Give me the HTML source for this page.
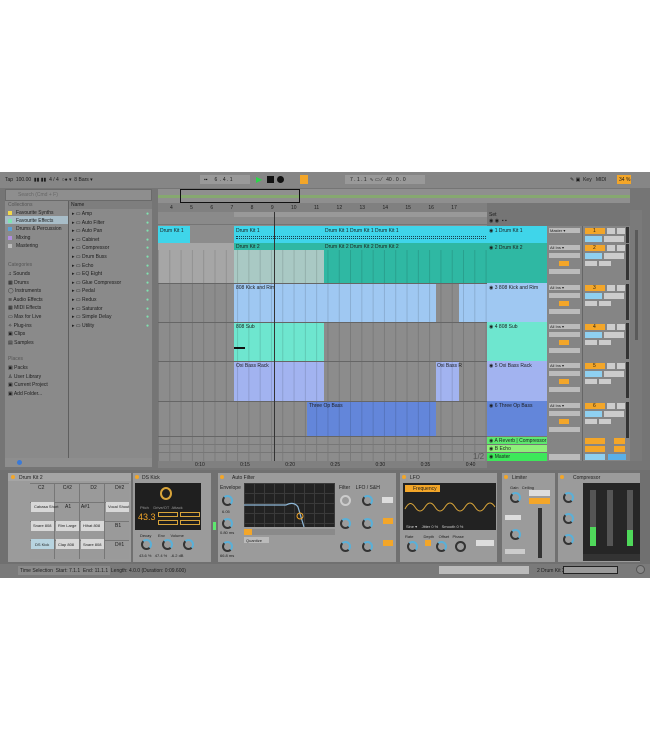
<!DOCTYPE html>
<html><head><style>
*{margin:0;padding:0;box-sizing:border-box}
body{width:650px;height:750px;background:#fff;position:relative;font-family:"Liberation Sans",sans-serif;font-size:5px;color:#222;overflow:hidden}
.a{position:absolute}
.t{position:absolute;white-space:nowrap;font-size:5px;color:#1c1c1c}
.k{position:absolute;width:11px;height:11px;border:2px solid #333;border-radius:50%;border-top-color:#5ab0d8;border-right-color:#5ab0d8}
.g{position:absolute;background-image:linear-gradient(90deg,rgba(0,0,0,.13) 1px,transparent 1px);background-size:11.3px 100%}
</style></head><body>
<div class="a" style="left:0;top:172px;width:650px;height:406px;background:#757575"></div>
<div class="a" style="left:0;top:172px;width:650px;height:16px;background:#868686"></div>
<div class="t" style="left:5px;top:177px">Tap &nbsp;100.00 &nbsp;▮▮ ▮▮ &nbsp;4 / 4 &nbsp;○● ▾ &nbsp;8 Bars ▾</div>
<div class="a" style="left:200px;top:175px;width:50px;height:9px;background:#999"></div>
<div class="t" style="left:204px;top:177px">▪▪ &nbsp;&nbsp;&nbsp;&nbsp;6 &nbsp;. 4 . 1</div>
<div class="t" style="left:256px;top:175px;font-size:8px;color:#2bd64a">▶</div>
<div class="a" style="left:267px;top:176px;width:7px;height:7px;background:#111"></div>
<div class="a" style="left:277px;top:176px;width:7px;height:7px;background:#111;border-radius:50%"></div>
<div class="a" style="left:300px;top:175px;width:8px;height:9px;background:#f3a629"></div>
<div class="a" style="left:345px;top:175px;width:80px;height:9px;background:#999"></div>
<div class="t" style="left:350px;top:177px">7 . 1 . 1 &nbsp;∿ ▭ ⁄ &nbsp;&nbsp;40 . 0 . 0</div>
<div class="t" style="left:570px;top:177px">✎ ▣ &nbsp;Key &nbsp;&nbsp;MIDI</div>
<div class="a" style="left:617px;top:175px;width:14px;height:9px;background:#f3a629"></div>
<div class="t" style="left:619px;top:177px">34 %</div>

<div class="a" style="left:5px;top:189px;width:147px;height:12px;background:#8e8e8e;border:1px solid #6a6a6a"></div>
<div class="t" style="left:18px;top:192px;color:#666">Search (Cmd + F)</div>
<div class="a" style="left:5px;top:201px;width:147px;height:257px;background:#8a8a8a"></div>
<div class="a" style="left:68px;top:201px;width:1px;height:257px;background:#5f5f5f"></div>
<div class="a" style="left:69px;top:201px;width:83px;height:8px;background:#7e7e7e"></div>
<div class="t" style="left:8px;top:202px;color:#555">Collections</div>
<div class="t" style="left:71px;top:202px">Name</div>
<div class="a" style="left:5px;top:216px;width:63px;height:8px;background:#a8bdc8"></div>
<div class="a" style="left:8px;top:211px;width:4px;height:4px;background:#f2d84a"></div><div class="t" style="left:16px;top:210px">Favourite Synths</div>
<div class="a" style="left:8px;top:219px;width:4px;height:4px;background:#7fe3b0"></div><div class="t" style="left:16px;top:218px">Favourite Effects</div>
<div class="a" style="left:8px;top:227px;width:4px;height:4px;background:#5aa0d8"></div><div class="t" style="left:16px;top:226px">Drums &amp; Percussion</div>
<div class="a" style="left:8px;top:236px;width:4px;height:4px;background:#b08ee0"></div><div class="t" style="left:16px;top:235px">Mixing</div>
<div class="a" style="left:8px;top:244px;width:4px;height:4px;background:#bbb"></div><div class="t" style="left:16px;top:243px">Mastering</div>
<div class="t" style="left:8px;top:262px;color:#555">Categories</div>
<div class="t" style="left:8px;top:270px;line-height:8.6px">♫ Sounds<br>▦ Drums<br>◯ Instruments<br>≋ Audio Effects<br>▦ MIDI Effects<br>▭ Max for Live<br>✧ Plug-ins<br>▣ Clips<br>▤ Samples</div>
<div class="t" style="left:8px;top:356px;color:#555">Places</div>
<div class="t" style="left:8px;top:364px;line-height:8.6px">▣ Packs<br>♙ User Library<br>▣ Current Project<br>▣ Add Folder...</div>
<div class="t" style="left:72px;top:210px;line-height:8.6px">▸ ▭ Amp<br>▸ ▭ Auto Filter<br>▸ ▭ Auto Pan<br>▸ ▭ Cabinet<br>▸ ▭ Compressor<br>▸ ▭ Drum Buss<br>▸ ▭ Echo<br>▸ ▭ EQ Eight<br>▸ ▭ Glue Compressor<br>▸ ▭ Pedal<br>▸ ▭ Redux<br>▸ ▭ Saturator<br>▸ ▭ Simple Delay<br>▸ ▭ Utility</div>
<div class="t" style="left:146px;top:210px;line-height:8.6px;color:#7fe3b0">●<br>●<br>●<br>●<br>●<br>●<br>●<br>●<br>●<br>●<br>●<br>●<br>●<br>●</div>
<div class="a" style="left:5px;top:458px;width:147px;height:9px;background:#8e8e8e"></div>
<div class="a" style="left:17px;top:460px;width:5px;height:5px;background:#3a7ad8;border-radius:50%"></div>

<div class="a" style="left:158px;top:189px;width:472px;height:14px;background:#8f8f8f"></div>
<div class="a" style="left:158px;top:195px;width:472px;height:3px;background:#86a870"></div>
<div class="a" style="left:180px;top:189px;width:120px;height:14px;border:1px solid #111"></div>
<div class="a" style="left:158px;top:203px;width:329px;height:9px;background:#808080"></div>
<div class="t" style="left:170px;top:205px;word-spacing:16px">4 5 6 7 8 9 10 11 12 13 14 15 16 17</div>
<div class="a" style="left:158px;top:212px;width:329px;height:12px;background:#8a8a8a"></div>
<div class="a" style="left:234px;top:212px;width:253px;height:5px;background:#999"></div>
<div class="t" style="left:489px;top:212px">Set</div>
<div class="t" style="left:489px;top:218px">◉ ◉ &nbsp;▪ ▪</div>

<div class="a" style="left:158px;top:225px;width:329px;height:236px;background:#8c8c8c"></div>
<div class="a" style="left:158px;top:243px;width:76px;height:40px;background:#a6a6a6"></div>
<div class="a" style="left:158px;top:226px;width:32px;height:17px;background:#3fd5ea"></div>
<div class="a" style="left:234px;top:226px;width:253px;height:17px;background:#3fd5ea"></div>
<div class="t" style="left:160px;top:228px">Drum Kit 1</div><div class="t" style="left:236px;top:228px">Drum Kit 1</div>
<div class="t" style="left:325px;top:228px">Drum Kit 1 Drum Kit 1 Drum Kit 1</div>
<div class="a" style="left:236px;top:236px;width:250px;height:3px;border-top:1px dotted #1a4050;border-bottom:1px dotted #1a4050"></div>
<div class="a" style="left:234px;top:243px;width:253px;height:40px;background:#2fb8a3"></div>
<div class="a" style="left:234px;top:250px;width:90px;height:33px;background:#a9c9c4"></div>
<div class="t" style="left:236px;top:244px">Drum Kit 2</div><div class="t" style="left:325px;top:244px">Drum Kit 2 Drum Kit 2 Drum Kit 2</div>
<div class="a" style="left:234px;top:283px;width:202px;height:39px;background:#9fc8f2"></div>
<div class="a" style="left:459px;top:283px;width:28px;height:39px;background:#9fc8f2"></div>
<div class="t" style="left:236px;top:285px">808 Kick and Rim</div>
<div class="a" style="left:234px;top:322px;width:90px;height:39px;background:#6ee6cf"></div>
<div class="t" style="left:236px;top:324px">808 Sub</div>
<div class="a" style="left:234px;top:347px;width:11px;height:2px;background:#111"></div>
<div class="a" style="left:234px;top:361px;width:90px;height:40px;background:#a2b3f0"></div>
<div class="a" style="left:436px;top:361px;width:23px;height:40px;background:#a2b3f0"></div>
<div class="t" style="left:236px;top:363px">Oxi Bass Rack</div><div class="t" style="left:437px;top:363px">Oxi Bass R</div>
<div class="a" style="left:307px;top:401px;width:129px;height:35px;background:#6386da"></div>
<div class="t" style="left:309px;top:403px">Three Op Bass</div>
<div class="g" style="left:158px;top:250px;width:329px;height:211px"></div>
<div class="a" style="left:158px;top:283px;width:329px;height:1px;background:#666"></div>
<div class="a" style="left:158px;top:322px;width:329px;height:1px;background:#666"></div>
<div class="a" style="left:158px;top:361px;width:329px;height:1px;background:#666"></div>
<div class="a" style="left:158px;top:401px;width:329px;height:1px;background:#666"></div>
<div class="a" style="left:158px;top:436px;width:329px;height:1px;background:#666"></div>
<div class="a" style="left:158px;top:444px;width:329px;height:1px;background:#777"></div>
<div class="a" style="left:158px;top:452px;width:329px;height:1px;background:#777"></div>
<div class="a" style="left:274px;top:212px;width:1px;height:249px;background:#333"></div>
<div class="t" style="left:473px;top:452px;font-size:8px;color:#555">1/2</div>
<div class="a" style="left:158px;top:461px;width:329px;height:7px;background:#808080"></div>
<div class="t" style="left:195px;top:462px;word-spacing:34px">0:10 0:15 0:20 0:25 0:30 0:35 0:40</div>

<div class="a" style="left:487px;top:226px;width:60px;height:17px;background:#3fd5ea"></div>
<div class="a" style="left:487px;top:243px;width:60px;height:40px;background:#2fb8a3"></div>
<div class="a" style="left:487px;top:283px;width:60px;height:39px;background:#9fc8f2"></div>
<div class="a" style="left:487px;top:322px;width:60px;height:39px;background:#6ee6cf"></div>
<div class="a" style="left:487px;top:361px;width:60px;height:40px;background:#a2b3f0"></div>
<div class="a" style="left:487px;top:401px;width:60px;height:35px;background:#6386da"></div>
<div class="a" style="left:487px;top:437px;width:60px;height:7px;background:#5ee86f"></div>
<div class="a" style="left:487px;top:445px;width:60px;height:7px;background:#8ef07a"></div>
<div class="a" style="left:487px;top:453px;width:60px;height:8px;background:#3de85a"></div>
<div class="t" style="left:489px;top:228px">◉ 1 Drum Kit 1</div>
<div class="t" style="left:489px;top:245px">◉ 2 Drum Kit 2</div>
<div class="t" style="left:489px;top:285px">◉ 3 808 Kick and Rim</div>
<div class="t" style="left:489px;top:324px">◉ 4 808 Sub</div>
<div class="t" style="left:489px;top:363px">◉ 5 Oxi Bass Rack</div>
<div class="t" style="left:489px;top:403px">◉ 6 Three Op Bass</div>
<div class="t" style="left:489px;top:438px">◉ A Reverb | Compressor</div>
<div class="t" style="left:489px;top:446px">◉ B Echo</div>
<div class="t" style="left:489px;top:454px">◉ Master</div>

<div class="a" style="left:547px;top:226px;width:83px;height:235px;background:#858585"></div>
<div class="a" style="left:582px;top:226px;width:1px;height:235px;background:#666"></div>
<div id="mx"></div>
<div class="a" style="left:630px;top:210px;width:12px;height:251px;background:#7a7a7a"></div>
<div class="a" style="left:635px;top:230px;width:3px;height:110px;background:#5a5a5a"></div>

<div class="a" style="left:0;top:470px;width:650px;height:94px;background:#707070"></div>
<div class="a" style="left:8px;top:473px;width:123px;height:89px;background:#9b9b9b"></div>
<div class="a" style="left:8px;top:473px;width:123px;height:8px;background:#a5a5a5"></div>
<div class="a" style="left:11px;top:475px;width:4px;height:4px;background:#f3a629;border-radius:50%"></div>
<div class="t" style="left:19px;top:475px">Drum Kit 2</div>
<div class="a" style="left:30px;top:483px;width:99px;height:76px;background:
linear-gradient(90deg,transparent 24px,#777 24px,#777 25px,transparent 25px),
linear-gradient(0deg,transparent 18px,#777 18px,#777 19px,transparent 19px);background-size:25px 19px;background-color:#9a9a9a"></div>
<div class="t" style="left:38px;top:485px;word-spacing:17px">C2 C#2 D2 D#2</div>
<div class="a" style="left:31px;top:502px;width:23px;height:10px;background:#d8d8d8"></div>
<div class="a" style="left:106px;top:502px;width:23px;height:10px;background:#d8d8d8"></div>
<div class="a" style="left:31px;top:521px;width:23px;height:10px;background:#d8d8d8"></div>
<div class="a" style="left:56px;top:521px;width:23px;height:10px;background:#d8d8d8"></div>
<div class="a" style="left:81px;top:521px;width:23px;height:10px;background:#d8d8d8"></div>
<div class="a" style="left:31px;top:539px;width:23px;height:10px;background:#b8d4e0"></div>
<div class="a" style="left:56px;top:539px;width:23px;height:10px;background:#d8d8d8"></div>
<div class="a" style="left:81px;top:539px;width:23px;height:10px;background:#d8d8d8"></div>
<div class="t" style="left:34px;top:504px;font-size:4px">Cabasa Short</div><div class="t" style="left:108px;top:504px;font-size:4px">Vocal Shout</div>
<div class="t" style="left:33px;top:523px;font-size:4px">Snare 808</div><div class="t" style="left:58px;top:523px;font-size:4px">Rim Large</div><div class="t" style="left:83px;top:523px;font-size:4px">Hihat 808</div>
<div class="t" style="left:35px;top:542px;font-size:4px">DS Kick</div><div class="t" style="left:58px;top:542px;font-size:4px">Clap 808</div><div class="t" style="left:83px;top:542px;font-size:4px">Snare 808</div>
<div class="t" style="left:65px;top:504px">A1 &nbsp;&nbsp;&nbsp;&nbsp;&nbsp;&nbsp;A#1</div>
<div class="t" style="left:115px;top:523px">B1</div><div class="t" style="left:115px;top:542px">D#1</div>
<div class="a" style="left:133px;top:473px;width:78px;height:89px;background:#9b9b9b"></div>
<div class="a" style="left:135px;top:475px;width:4px;height:4px;background:#f3a629;border-radius:50%"></div>
<div class="t" style="left:142px;top:475px">DS Kick</div>
<div class="a" style="left:135px;top:483px;width:66px;height:47px;background:#1f1f1f"></div>
<div class="a" style="left:160px;top:487px;width:12px;height:13px;border:2px solid #d8a43a;border-radius:50%"></div>
<div class="t" style="left:140px;top:505px;color:#999;font-size:4px">Pitch &nbsp;&nbsp;&nbsp;Drive/OT &nbsp;Attack</div>
<div class="t" style="left:138px;top:512px;color:#f3a629;font-size:9px">43.3</div>
<div class="a" style="left:158px;top:512px;width:20px;height:5px;border:1px solid #d8a43a"></div>
<div class="a" style="left:180px;top:512px;width:20px;height:5px;border:1px solid #d8a43a"></div>
<div class="a" style="left:158px;top:520px;width:20px;height:5px;border:1px solid #d8a43a"></div>
<div class="a" style="left:180px;top:520px;width:20px;height:5px;border:1px solid #d8a43a"></div>
<div class="t" style="left:140px;top:533px;font-size:4px">Decay &nbsp;&nbsp;&nbsp;&nbsp;&nbsp;Env &nbsp;&nbsp;&nbsp;&nbsp;Volume</div>
<div class="k" style="left:141px;top:539px"></div><div class="k" style="left:162px;top:539px"></div><div class="k" style="left:183px;top:539px"></div>
<div class="t" style="left:139px;top:553px;font-size:4px">43.6 % &nbsp;&nbsp;47.4 % &nbsp;&nbsp;-6.2 dB</div>
<div class="a" style="left:213px;top:522px;width:3px;height:8px;background:#5ee86f"></div>
<div class="a" style="left:218px;top:473px;width:178px;height:89px;background:#9b9b9b"></div>
<div class="a" style="left:220px;top:475px;width:4px;height:4px;background:#f3a629;border-radius:50%"></div>
<div class="t" style="left:232px;top:475px">Auto Filter</div>
<div class="t" style="left:220px;top:485px">Envelope</div>
<div class="k" style="left:222px;top:495px"></div><div class="k" style="left:222px;top:518px"></div><div class="k" style="left:222px;top:541px"></div>
<div class="t" style="left:222px;top:509px;font-size:4px">6.05</div><div class="t" style="left:220px;top:530px;font-size:4px">0.80 ms</div><div class="t" style="left:220px;top:553px;font-size:4px">66.8 ms</div>
<div class="a" style="left:244px;top:483px;width:91px;height:44px;background:#222;background-image:linear-gradient(90deg,#3a3a3a 1px,transparent 1px),linear-gradient(#3a3a3a 1px,transparent 1px);background-size:10px 10px"></div>
<svg class="a" style="left:244px;top:483px" width="91" height="44"><path d="M0 22 L42 22 Q50 18 54 24 L60 44" stroke="#8fb8d8" fill="none" stroke-width="1.2"/><circle cx="56" cy="33" r="3" fill="none" stroke="#f3a629"/></svg>
<div class="a" style="left:244px;top:529px;width:91px;height:6px;background:#8a8a8a"></div>
<div class="a" style="left:244px;top:529px;width:8px;height:6px;background:#f3a629"></div>
<div class="a" style="left:244px;top:537px;width:25px;height:6px;background:#bbb"></div>
<div class="t" style="left:246px;top:538px;font-size:4px">Quantize</div>
<div class="t" style="left:339px;top:485px">Filter &nbsp;&nbsp;&nbsp;LFO / S&amp;H</div>
<div class="k" style="left:340px;top:495px;border-color:#ccc"></div><div class="k" style="left:340px;top:518px"></div><div class="k" style="left:340px;top:541px"></div>
<div class="k" style="left:362px;top:495px"></div><div class="k" style="left:362px;top:518px"></div><div class="k" style="left:362px;top:541px"></div>
<div class="a" style="left:382px;top:497px;width:11px;height:6px;background:#ddd"></div>
<div class="a" style="left:383px;top:518px;width:10px;height:6px;background:#f3a629"></div>
<div class="a" style="left:383px;top:540px;width:10px;height:6px;background:#f3a629"></div>
<div class="a" style="left:400px;top:473px;width:97px;height:89px;background:#9b9b9b"></div>
<div class="a" style="left:402px;top:475px;width:4px;height:4px;background:#f3a629;border-radius:50%"></div>
<div class="t" style="left:410px;top:475px">LFO</div>
<div class="a" style="left:403px;top:483px;width:93px;height:47px;background:#222"></div>
<div class="a" style="left:405px;top:485px;width:35px;height:7px;background:#f3a629"></div>
<div class="t" style="left:413px;top:486px">Frequency</div>
<svg class="a" style="left:403px;top:495px" width="93" height="25"><path d="M2 14 Q7 4 12 12 T22 12 T32 12 T42 12 T52 12 T62 12 T72 12 T82 12 T92 12" stroke="#d8a43a" fill="none"/></svg>
<div class="t" style="left:406px;top:524px;color:#ccc;font-size:4px">Sine ▾ &nbsp;&nbsp;&nbsp;Jitter 0 % &nbsp;&nbsp;Smooth 0 %</div>
<div class="t" style="left:405px;top:534px;font-size:4px">Rate &nbsp;&nbsp;&nbsp;&nbsp;&nbsp;&nbsp;&nbsp;&nbsp;Depth &nbsp;&nbsp;&nbsp;Offset &nbsp;&nbsp;Phase</div>
<div class="k" style="left:407px;top:541px"></div><div class="k" style="left:436px;top:541px"></div><div class="k" style="left:455px;top:541px;border-color:#333"></div>
<div class="a" style="left:425px;top:540px;width:6px;height:6px;background:#f3a629"></div>
<div class="a" style="left:476px;top:540px;width:18px;height:6px;background:#ddd"></div>
<div class="a" style="left:502px;top:473px;width:53px;height:89px;background:#9b9b9b"></div>
<div class="a" style="left:504px;top:475px;width:4px;height:4px;background:#f3a629;border-radius:50%"></div>
<div class="t" style="left:512px;top:475px">Limiter</div>
<div class="t" style="left:510px;top:485px;font-size:4px">Gain &nbsp;&nbsp;Ceiling</div>
<div class="k" style="left:510px;top:492px"></div><div class="k" style="left:510px;top:529px"></div>
<div class="a" style="left:529px;top:490px;width:21px;height:6px;background:#ddd"></div>
<div class="a" style="left:529px;top:498px;width:21px;height:6px;background:#f3a629"></div>
<div class="a" style="left:538px;top:508px;width:4px;height:50px;background:#333"></div>
<div class="a" style="left:505px;top:515px;width:16px;height:5px;background:#ddd"></div>
<div class="a" style="left:505px;top:549px;width:20px;height:5px;background:#ccc"></div>
<div class="a" style="left:558px;top:473px;width:82px;height:89px;background:#9b9b9b"></div>
<div class="a" style="left:560px;top:475px;width:4px;height:4px;background:#f3a629;border-radius:50%"></div>
<div class="t" style="left:573px;top:475px">Compressor</div>
<div class="k" style="left:563px;top:492px"></div><div class="k" style="left:563px;top:513px"></div><div class="k" style="left:563px;top:534px"></div>
<div class="a" style="left:583px;top:483px;width:57px;height:71px;background:#262626"></div>
<div class="a" style="left:590px;top:490px;width:6px;height:56px;background:#555"></div>
<div class="a" style="left:590px;top:527px;width:6px;height:19px;background:#4fd85a"></div>
<div class="a" style="left:607px;top:490px;width:6px;height:56px;background:#555"></div>
<div class="a" style="left:627px;top:490px;width:6px;height:56px;background:#555"></div>
<div class="a" style="left:627px;top:530px;width:6px;height:16px;background:#4fd85a"></div>
<div class="a" style="left:583px;top:554px;width:57px;height:7px;background:#333"></div>

<div class="a" style="left:0;top:564px;width:650px;height:14px;background:#7a7a7a"></div>
<div class="a" style="left:18px;top:566px;width:92px;height:9px;background:#8a8a8a"></div>
<div class="t" style="left:20px;top:568px">Time Selection &nbsp;Start: 7.1.1 &nbsp;End: 11.1.1 &nbsp;Length: 4.0.0 (Duration: 0:09.600)</div>
<div class="a" style="left:439px;top:566px;width:90px;height:8px;background:#bbb"></div>
<div class="t" style="left:537px;top:568px">2 Drum Kit 2</div>
<div class="a" style="left:563px;top:566px;width:55px;height:8px;background:#9a9a9a;border:1px solid #222"></div>
<div class="a" style="left:636px;top:565px;width:9px;height:9px;border-radius:50%;background:#888;border:1px solid #555"></div>

<script>
var rows=[[226,"1","-13.5"],[243,"2","-6.0"],[283,"3","-11.0"],[322,"4","-inf"],[361,"5","-5.5"],[401,"6","-6.0"]];
var h="";
rows.forEach(function(r){var y=r[0];
h+='<div class="a" style="left:549px;top:'+(y+2)+'px;width:31px;height:5px;background:#bbb"></div>';
h+='<div class="t" style="left:550px;top:'+(y+2)+'px;font-size:4px">'+(r[1]=="1"?"Master ▾":"All Ins ▾")+'</div>';
h+='<div class="a" style="left:585px;top:'+(y+2)+'px;width:20px;height:6px;background:#f3a629"></div>';
h+='<div class="t" style="left:593px;top:'+(y+2)+'px">'+r[1]+'</div>';
h+='<div class="a" style="left:607px;top:'+(y+2)+'px;width:8px;height:6px;background:#ccc"></div>';
h+='<div class="a" style="left:617px;top:'+(y+2)+'px;width:8px;height:6px;background:#ccc"></div>';
h+='<div class="a" style="left:585px;top:'+(y+10)+'px;width:17px;height:6px;background:#8fd0f0"></div>';
h+='<div class="a" style="left:604px;top:'+(y+10)+'px;width:20px;height:6px;background:#ccc"></div>';
if(r[1]!="1"){
h+='<div class="a" style="left:549px;top:'+(y+10)+'px;width:31px;height:5px;background:#bbb"></div>';
h+='<div class="a" style="left:559px;top:'+(y+18)+'px;width:10px;height:5px;background:#f3a629"></div>';
h+='<div class="a" style="left:549px;top:'+(y+26)+'px;width:31px;height:5px;background:#bbb"></div>';
h+='<div class="a" style="left:585px;top:'+(y+18)+'px;width:12px;height:5px;background:#ccc"></div>';
h+='<div class="a" style="left:599px;top:'+(y+18)+'px;width:12px;height:5px;background:#ccc"></div>';}
h+='<div class="a" style="left:626px;top:'+(y+1)+'px;width:3px;height:'+(r[1]=="1"?16:36)+'px;background:#333"></div>';
});
[[437,"A"],[445,"B"]].forEach(function(r){h+='<div class="a" style="left:585px;top:'+(r[0]+1)+'px;width:20px;height:6px;background:#f3a629"></div><div class="a" style="left:614px;top:'+(r[0]+1)+'px;width:11px;height:6px;background:#f3a629"></div>';});
h+='<div class="a" style="left:549px;top:454px;width:31px;height:6px;background:#bbb"></div><div class="a" style="left:585px;top:454px;width:20px;height:6px;background:#8fd0f0"></div><div class="a" style="left:608px;top:454px;width:18px;height:6px;background:#5ab0e8"></div>';
document.getElementById("mx").innerHTML=h;
</script>
</body></html>
